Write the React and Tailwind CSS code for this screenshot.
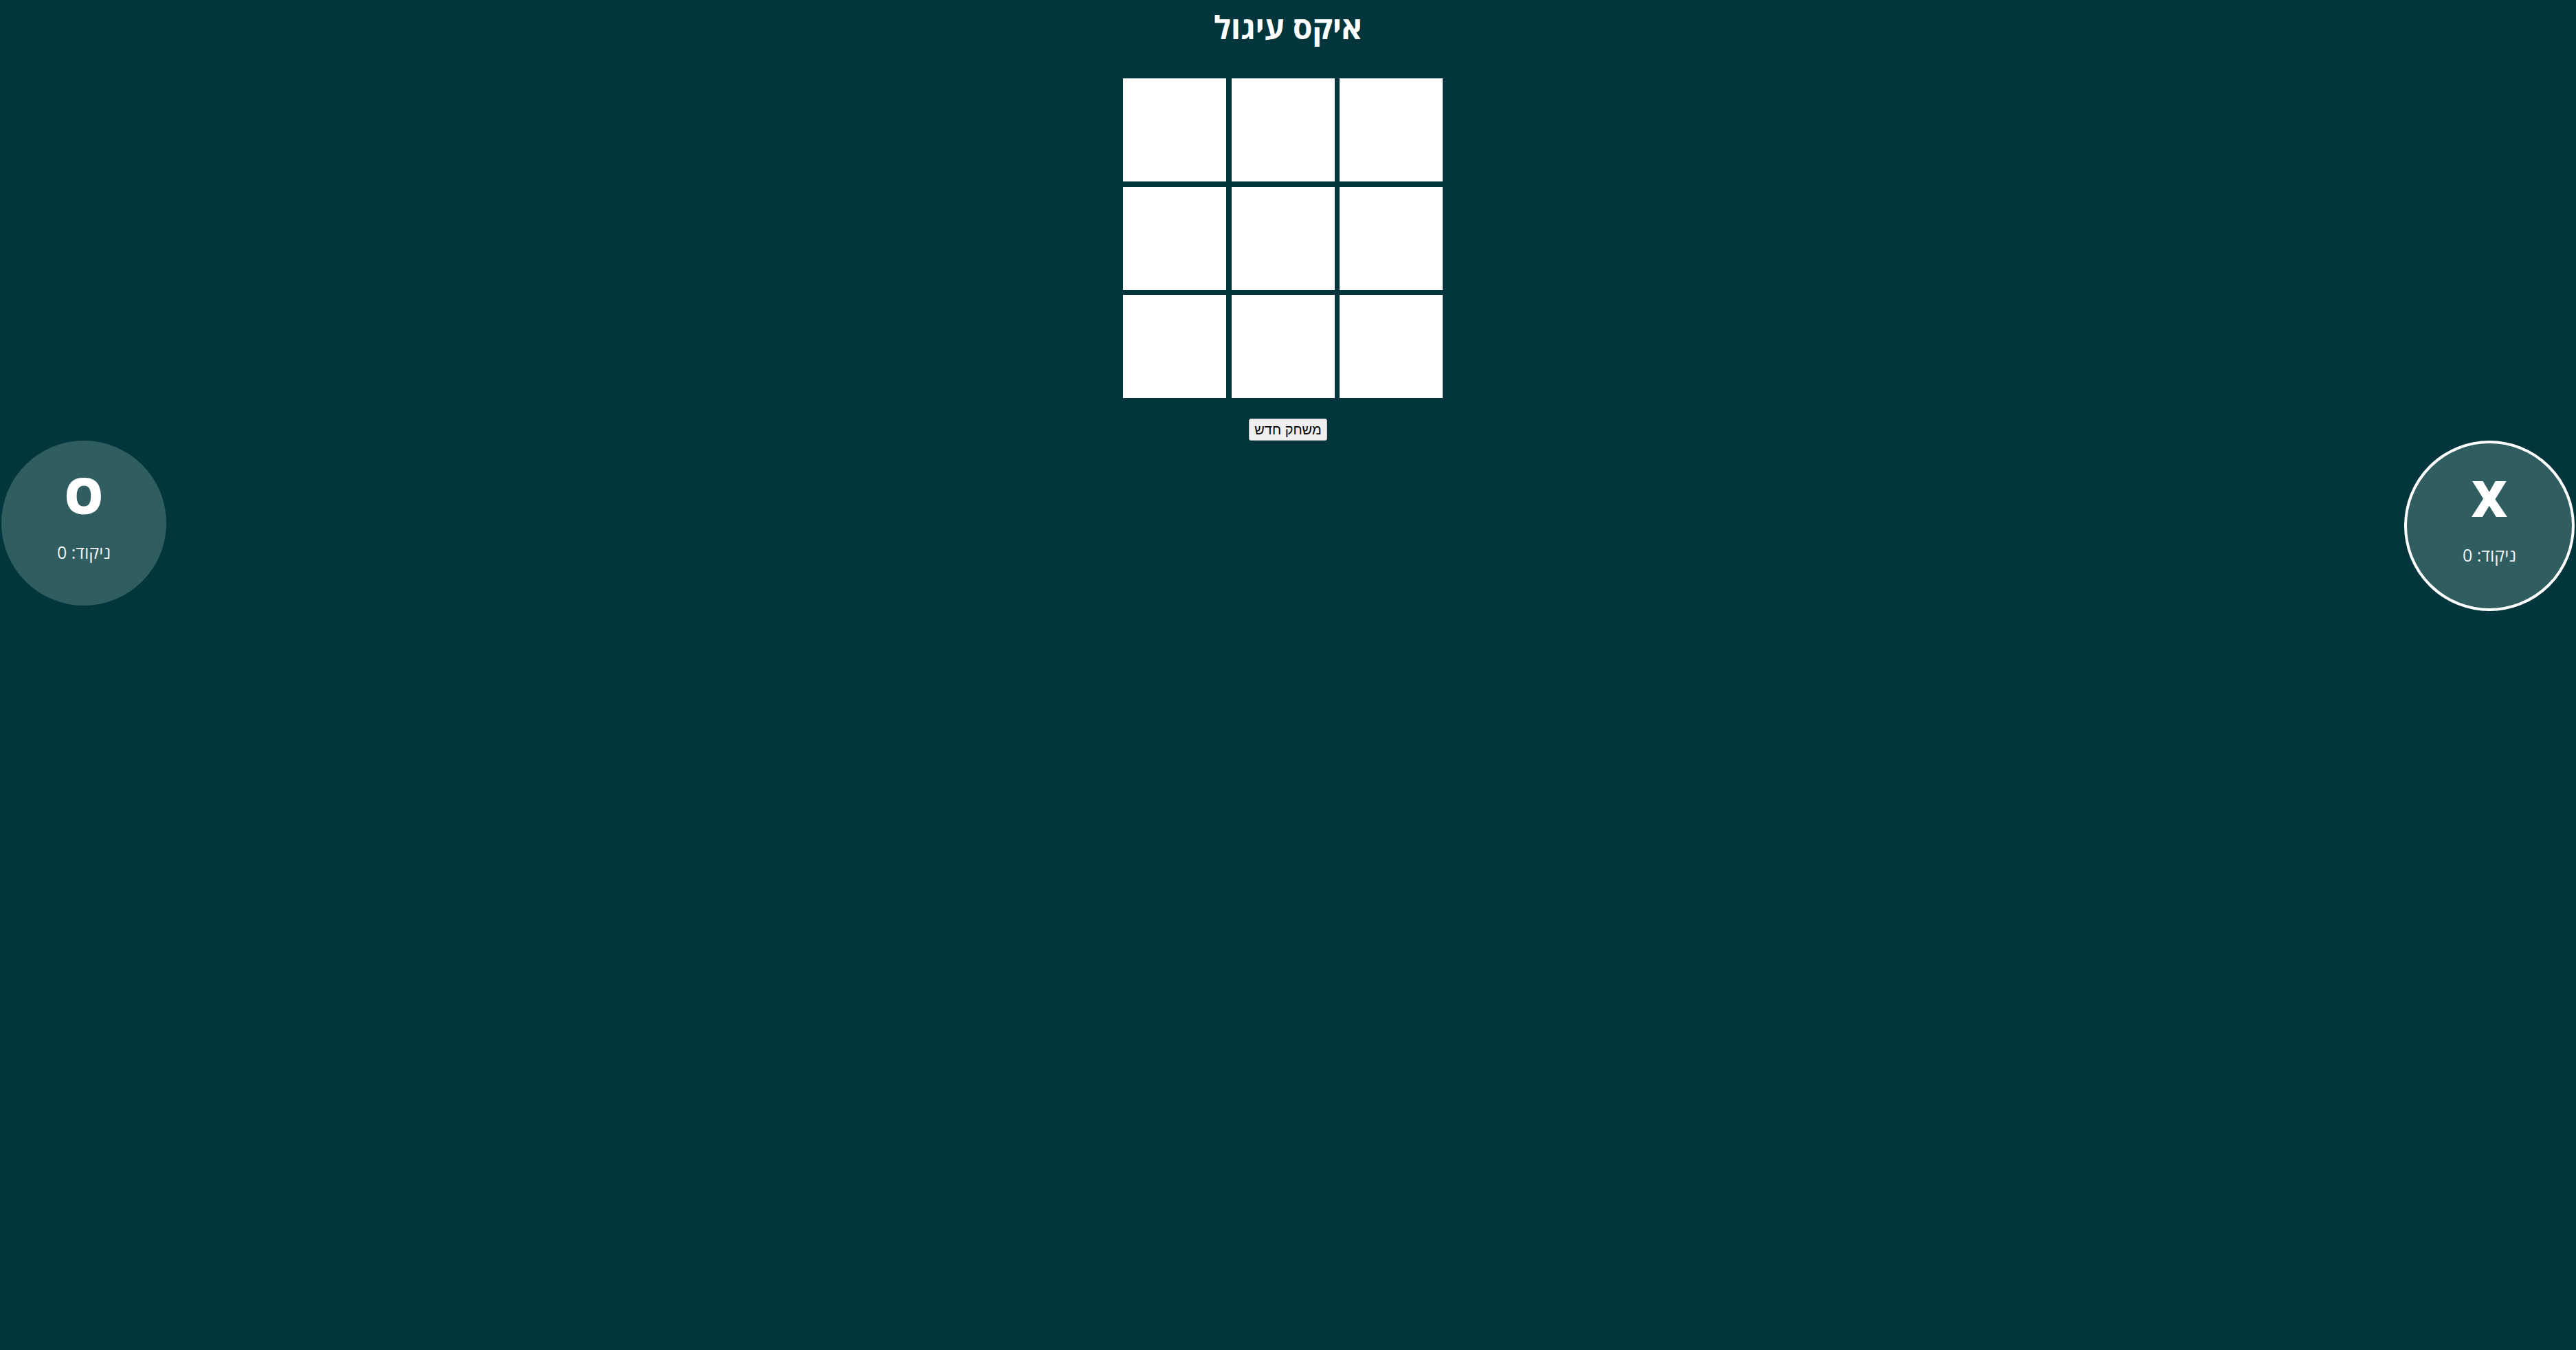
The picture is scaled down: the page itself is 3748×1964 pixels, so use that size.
import { useState } from 'react';

function PlayerCard({ symbol, score, active }) {
  return (
    <div
      className={
        active
          ? 'w-[248px] h-[248px] rounded-full bg-[#2f5d60] border-4 border-white flex flex-col items-center pt-[43px]'
          : 'w-[240px] h-[240px] rounded-full bg-[#2f5d60] flex flex-col items-center pt-[43px]'
      }
    >
      <div className="text-[72px] leading-none font-extrabold text-white">
        {symbol}
      </div>
      <div className="mt-[35px] text-[25px] leading-none text-[#f2f2f2]">
        ניקוד: {score}
      </div>
    </div>
  );
}

export default function App() {
  const [board, setBoard] = useState(Array(9).fill(null));
  const [turn, setTurn] = useState('X');
  const [scores] = useState({ X: 0, O: 0 });

  const play = (i) => {
    if (board[i]) return;
    const next = [...board];
    next[i] = turn;
    setBoard(next);
    setTurn(turn === 'X' ? 'O' : 'X');
  };

  const reset = () => {
    setBoard(Array(9).fill(null));
    setTurn('X');
  };

  return (
    <div dir="rtl" className="min-h-screen w-full bg-[#02363c] font-['Open_Sans',sans-serif]">
      <h1 className="pt-[16px] text-center text-[46px] leading-none font-bold text-white">
        איקס עיגול
      </h1>

      <div dir="ltr" className="w-[480px] mx-auto mt-[52px]">
        <div className="grid grid-cols-[repeat(3,150px)] gap-[7.5px]">
          {board.map((cell, i) => (
            <button
              key={i}
              onClick={() => play(i)}
              className="w-[150px] h-[150px] bg-white text-[#02363c] text-[80px] font-bold"
            >
              {cell}
            </button>
          ))}
        </div>
      </div>

      <div className="flex justify-center mt-[30px]">
        <button
          onClick={reset}
          className="w-[114px] h-[32px] bg-[#efefef] border border-[#c4c4c4] rounded-[3px] text-[20px] leading-none text-black font-['Liberation_Sans','DejaVu_Sans',sans-serif]"
        >
          משחק חדש
        </button>
      </div>

      <div className="flex justify-between items-start px-[2px]">
        <PlayerCard symbol="X" score={scores.X} active={turn === 'X'} />
        <PlayerCard symbol="O" score={scores.O} active={turn === 'O'} />
      </div>
    </div>
  );
}
